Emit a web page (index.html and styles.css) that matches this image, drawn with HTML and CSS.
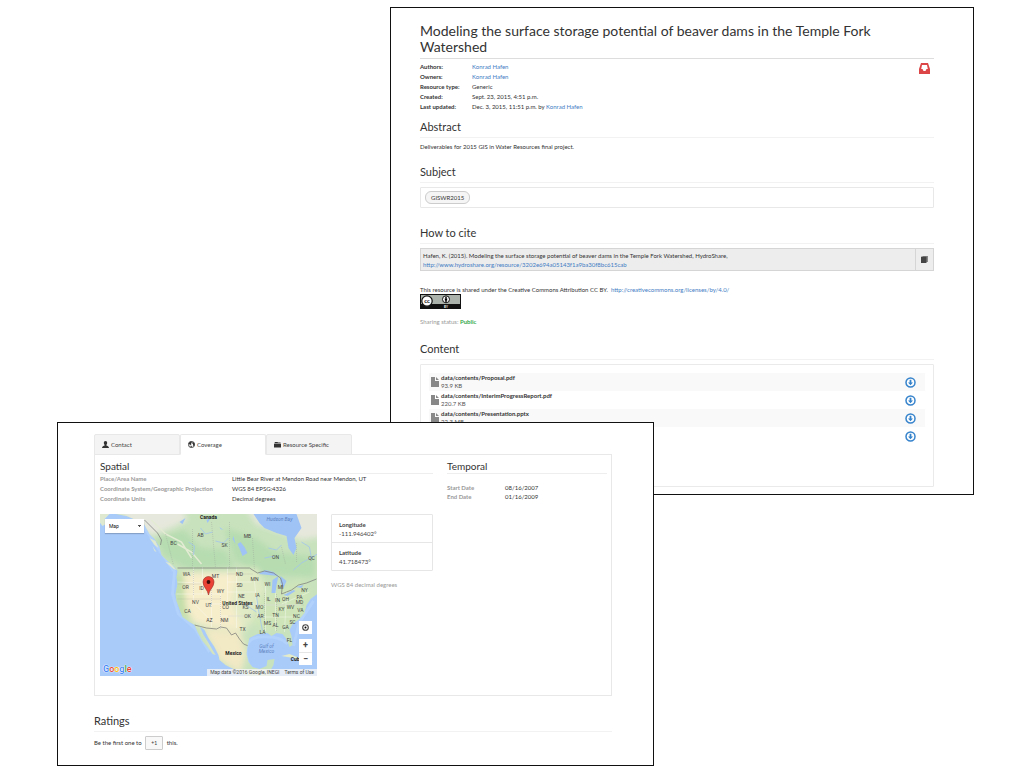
FILE: index.html
```html
<!DOCTYPE html>
<html lang="en">
<head>
<meta charset="utf-8">
<title>Modeling the surface storage potential of beaver dams</title>
<link rel="stylesheet" href="styles.css">
</head>
<body>
<svg class="sprite" aria-hidden="true">
  <symbol id="file" viewBox="0 0 8 10"><path fill="#888" d="M0 0h4v4h4v6H0zM5 0l3 3H5z"/></symbol>
  <symbol id="download" viewBox="0 0 11 11"><circle cx="5.5" cy="5.5" r="4.5" fill="#fff" stroke="#3683cc" stroke-width="1.5"/><path fill="#3683cc" d="M4.6 2.8h1.8v2.7H8L5.500 8.300 3 5.500h1.600z"/></symbol>
</svg>
<main class="desktop">
  <article class="window resource">
    <h1 class="title">Modeling the surface storage potential of beaver dams in the Temple Fork Watershed</h1>
    <div class="summary">
      <table class="meta">
        <tr><th scope="row">Authors:</th><td><a href="#">Konrad Hafen</a></td></tr>
        <tr><th scope="row">Owners:</th><td><a href="#">Konrad Hafen</a></td></tr>
        <tr><th scope="row">Resource type:</th><td>Generic</td></tr>
        <tr><th scope="row">Created:</th><td>Sept. 23, 2015, 4:51 p.m.</td></tr>
        <tr><th scope="row">Last updated:</th><td>Dec. 3, 2015, 11:51 p.m. by <a href="#">Konrad Hafen</a></td></tr>
      </table>
      <a class="inbox" href="#" aria-label="Open"><svg viewBox="0 0 11 11"><path fill="#dc4646" fill-rule="evenodd" d="M2 0h7l2 6v5H0V6zM3 2L2.200 6h1.300l1 2h2l1-2h1.300L8 2z"/></svg></a>
    </div>
    <section class="part">
      <h2>Abstract</h2>
      <p class="abstract">Deliverables for 2015 GIS in Water Resources final project.</p>
    </section>
    <section class="part">
      <h2>Subject</h2>
      <div class="subjects"><a class="tag" href="#">GISWR2015</a></div>
    </section>
    <section class="part">
      <h2>How to cite</h2>
      <div class="cite">
        <p>Hafen, K. (2015). Modeling the surface storage potential of beaver dams in the Temple Fork Watershed, HydroShare,<br><a href="#">http://www.hydroshare.org/resource/3202e694a05143f1a9ba30f8bc615cab</a></p>
        <button class="copy" aria-label="Copy"><svg viewBox="0 0 7 7"><path fill="#888" d="M1.500 0H7v6H1.500z"/><path fill="#444" d="M0 .7h5.500V7H0z"/></svg></button>
      </div>
      <div class="license">
        <p>This resource is shared under the Creative Commons Attribution CC BY. &nbsp;<a href="#">http://creativecommons.org/licenses/by/4.0/</a></p>
        <svg class="cc" viewBox="0 0 41 15" role="img" aria-label="CC BY"><path fill="#111" d="M0 0h41v15H0z"/><path fill="#aab2ab" d="M1 1h39v9H1z"/><circle cx="7" cy="7" r="5.200" fill="#fff" stroke="#111" stroke-width="1.200"/><text x="7" y="9" font-size="6" font-weight="bold" text-anchor="middle">cc</text><circle cx="26" cy="5.300" r="3.500" fill="#fff" stroke="#111"/><circle cx="26" cy="3.400" r=".8"/><path d="M24.800 4.300h2.400v2.200h-.5v1.700h-1.400V6.500h-.5z"/><text x="26" y="14" font-size="3" fill="#fff" font-weight="bold" text-anchor="middle">BY</text></svg>
      </div>
      <p class="status">Sharing status: <strong>Public</strong></p>
    </section>
    <section class="part">
      <h2>Content</h2>
      <div class="content">
        <ul class="files">
          <li><svg class="doc"><use href="#file"/></svg><div class="name"><b>data/contents/Proposal.pdf</b><small>93.9 KB</small></div><a class="get" href="#" aria-label="Download"><svg><use href="#download"/></svg></a></li>
          <li><svg class="doc"><use href="#file"/></svg><div class="name"><b>data/contents/InterimProgressReport.pdf</b><small>220.7 KB</small></div><a class="get" href="#" aria-label="Download"><svg><use href="#download"/></svg></a></li>
          <li><svg class="doc"><use href="#file"/></svg><div class="name"><b>data/contents/Presentation.pptx</b><small>22.3 MB</small></div><a class="get" href="#" aria-label="Download"><svg><use href="#download"/></svg></a></li>
          <li><svg class="doc"><use href="#file"/></svg><div class="name"></div><a class="get" href="#" aria-label="Download"><svg><use href="#download"/></svg></a></li>
        </ul>
      </div>
    </section>
  </article>

  <article class="window details">
    <div class="tabs" role="tablist">
      <button class="tab" role="tab"><svg viewBox="0 0 8 8"><path fill="#333" d="M4 0c1.300 0 2 1 1.900 2.300C5.800 3.500 5.300 4 5 4.500v.6c1 .4 3 .8 3 2.900H0c0-2.100 2-2.500 3-2.900v-.6c-.3-.5-.8-1-.9-2.200C2 1 2.700 0 4 0z"/></svg>Contact</button>
      <button class="tab active" role="tab" aria-selected="true"><svg viewBox="0 0 8 8"><circle cx="4" cy="4" r="3.500" fill="#fff" stroke="#333"/><path fill="#333" d="M.5 3L2 1l2-.6.500 1.200-1 .9.600 1L3 4.600 1.700 4zM5 1l2 1 .7 2L7 5.800 5.600 5l.2-1.500L4.900 3zM3 5l1.500.6L4 7.500 3 7z"/></svg>Coverage</button>
      <button class="tab" role="tab"><svg viewBox="0 0 8 8"><path fill="#333" d="M1 1h3l.5.6H7.500V2.500h-7zM0 3h8v4.500H0z"/></svg>Resource Specific</button>
    </div>
    <div class="panel">
      <section class="spatial">
        <h3>Spatial</h3>
        <table class="facts">
          <tr><th scope="row">Place/Area Name</th><td>Little Bear River at Mendon Road near Mendon, UT</td></tr>
          <tr><th scope="row">Coordinate System/Geographic Projection</th><td>WGS 84 EPSG:4326</td></tr>
          <tr><th scope="row">Coordinate Units</th><td>Decimal degrees</td></tr>
        </table>
        <div class="place">
          <div class="map">
            <svg class="land" viewBox="0 0 218 162" preserveAspectRatio="xMidYMid slice" role="img" aria-label="Map of North America">
              <defs>
                <clipPath id="coast"><path d="M16 0L27 2 44 9 50 20 55 25 60 33 62 41 68 47 75 53 78 57 77 63 78 70 76 80 77 87 80 95 83 103 90 108 95 111 98 118 103 127 108 133 113 140 116 141 113 136 109 129 104 121 100 112 105 116 109 124 115 133 119 141 120 146 126 151 132 154 141 158 148 162H171L170 158 174 151 175 145 168 146 167 152 160 155 153 153 149 148 147 140 148 132 150 124 158 120 168 119 172 122 177 119 183 120 187 125 190 133 193 131 192 122 190 116 193 110 200 105 205 99 207 91 211 85 218 80V0z"/></clipPath>
                <filter id="soft"><feGaussianBlur stdDeviation="3"/></filter>
              </defs>
              <path fill="#a9cbfa" d="M0 0h218v162H0z"/>
              <path fill="none" stroke="#b2d1fb" stroke-width="3" d="M44 12L60 36 75 58 73 80 79 100 96 115 110 138M150 153Q140 125 160 123T188 130M194 132L200 108 214 87"/>
              <path fill="#dfe9cf" d="M0 0h10L5 5l3 4-5 3-3-4zM50 24l5 7 4 3-3-7zM53 32l4 6-2-1zM66 48l8 7 3 1-6-7z"/>
              <g clip-path="url(#coast)">
                <path fill="#c8e2bd" d="M0 0h218v162H0z"/>
                <g filter="url(#soft)">
                  <path fill="#e7e8dd" d="M15 -6h68l5 12-12 6-24 10-17-10zM146 -6h80v28l-25 4-20-8-24-8z"/>
                  <path fill="#b6dcb0" d="M56 24l29-8 15 18 25 2 10 16-45 4-25-14zM125 14l30 10 20 14 40 5v20l-60-3-20-15z"/>
                  <path fill="#f6edcb" d="M81 58h62l5 37-3 22-20-2-30-5-10-14-3-15z"/>
                  <path fill="#e0eac5" d="M140 54h18l12 30-26 34-12-30z"/>
                  <path fill="#cfe5b9" d="M162 80l40-15 10 15-15 30-30 8-15-10z"/>
                  <path fill="#f2e9c5" d="M103 114l38 4 6 22-6 20-22-14z"/>
                  <path fill="#c0dda4" d="M76 60h8l1 20 2 16 6 12-14-10z"/>
                </g>
                <g fill="none" stroke="#e3ebd3"><path stroke-width="1.500" d="M52 6l14 14 16 8 10 16M78 30l14 8 10 12"/></g>
                <path fill="none" stroke="#fff" stroke-opacity=".6" stroke-width=".6" d="M78 68l23 1M77 80h44M94 53v36l18 18M103 53v27M112 69v44M121 80v35M109 90h46M128 53v37M137 53v61M128 68h24M128 78h28M155 67l3 35M166 71v46M154 91h48M156 103h41M176 72v45M187 78l-2 40M182 90l28-12M121 102h35"/>
                <g fill="none" stroke="#999" stroke-opacity=".7" stroke-dasharray="1 1" stroke-width=".5"><path d="M66 20l8 31M93 15v38M112 8l4 45M130 8v45M153 24l2 32M182 33l4 17M197 29v20M94 56v25M112 68v25M128 60h26M78 70h24M78 85h44M121 82v34M129 102h27M165 79v38M177 80v37M155 91h49"/></g>
                <path fill="#9fc3f5" d="M154 0l6 9 5 5 12 5 10 3 2 12 5 7 3-7-2-10 7-10-5-14zM138 30l3 7 2 5 5-3-3-6-4-5zM159 60l7-4 8 2 5 4-10-1zM172 79l1-13 6-4-2 9-1 8zM181 62l6 5-3 7-3-5zM184 81l10-5 2 1-8 5zM196 73l8-2-2 3zM80 8l6-4-3 6zM107 6l5-3-4 6zM120 13l4 3-3-1zM134 22l2 8-3-5z"/>
                <path fill="none" stroke="#a2c4ed" stroke-width=".8" d="M101 14l5 6 7-2M89 28l6 4-1 9M116 27l8 2 5-5M169 34l8 2 5-5M202 28l8 5 2 12M165 44l10-2M194 56l8-7 16-9M157 82l2 14 4 21M145 90l12 8"/>
                <path fill="none" stroke="#777" stroke-width=".7" d="M45 6l8 8 5 5 4 7-1 5M78 54H150l3 2 5 3 7-2 9 2 7 5 2 6-1 10 10-4 7-5 8-2 10-4M95 111l12 3 10 1 4-2 6 1 5 7 4-2 4 6 4 5 5 2"/>
              </g>
              <path fill="#e3ebc9" d="M182 142l8-2 10 4 11 2 2 2-10 1-9-5z"/>
              <g class="labels">
                <text x="109" y="5" class="country">Canada</text><text x="138" y="91" class="country">United States</text><text x="134" y="141" class="country">Mexico</text><text x="197" y="147" class="country">Cuba</text>
                <text x="180" y="7" class="sea">Hudson Bay</text><text x="167" y="134" class="sea">Gulf of</text><text x="167" y="139" class="sea">Mexico</text>
                <text x="101" y="23">AB</text><text x="74" y="31">BC</text><text x="125" y="33">SK</text><text x="148" y="24">MB</text><text x="176" y="45">ON</text><text x="212" y="46">QC</text><text x="87" y="62">WA</text><text x="116" y="64">MT</text><text x="140" y="62">ND</text><text x="155" y="67">MN</text><text x="86" y="75">OR</text><text x="102" y="76">ID</text><text x="121" y="79">WY</text><text x="140" y="73">SD</text><text x="168" y="72">WI</text><text x="181" y="75">MI</text><text x="205" y="78">NY</text><text x="142" y="84">NE</text><text x="158" y="83">IA</text><text x="169" y="87">IL</text><text x="178" y="88">IN</text><text x="186" y="87">OH</text><text x="200" y="85">PA</text><text x="96" y="90">NV</text><text x="109" y="93">UT</text><text x="126" y="95">CO</text><text x="146" y="95">KS</text><text x="160" y="95">MO</text><text x="182" y="97">KY</text><text x="191" y="95">WV</text><text x="201" y="98">VA</text><text x="200" y="90">MD</text><text x="88" y="99">CA</text><text x="110" y="108">AZ</text><text x="125" y="108">NM</text><text x="148" y="104">OK</text><text x="161" y="104">AR</text><text x="176" y="103">TN</text><text x="197" y="104">NC</text><text x="168" y="111">MS</text><text x="176" y="113">AL</text><text x="186" y="115">GA</text><text x="193" y="110">SC</text><text x="143" y="117">TX</text><text x="163" y="120">LA</text><text x="190" y="128">FL</text>
              </g>
              <path fill="#ea4335" stroke="#962b22" stroke-width=".6" d="M109 81c-.5-5-5.500-8-5.500-13a5.500 5.500 0 0 1 11 0c0 5-5 8-5.500 13z"/><circle cx="109" cy="68" r="1.900" fill="#400c08"/>
            </svg>
            <select class="maptype" aria-label="Map type"><option>Map</option></select>
            <span class="google"><i>G</i><i>o</i><i>o</i><i>g</i><i>l</i><i>e</i></span>
            <div class="controls">
              <button aria-label="Recenter"><svg viewBox="0 0 7 7"><circle cx="3.500" cy="3.500" r="2.800" fill="none" stroke="#444" stroke-width="1.100"/><circle cx="3.500" cy="3.500" r="1"/></svg></button>
              <div class="zoom"><button aria-label="Zoom in">+</button><button aria-label="Zoom out">−</button></div>
            </div>
            <p class="credit"><span>Map data ©2016 Google, INEGI</span><a href="#">Terms of Use</a></p>
          </div>
          <div class="coords">
            <dl><div><dt>Longitude</dt><dd>-111.946402°</dd></div><div><dt>Latitude</dt><dd>41.718473°</dd></div></dl>
            <p>WGS 84 decimal degrees</p>
          </div>
        </div>
      </section>
      <section class="temporal">
        <h3>Temporal</h3>
        <table class="dates">
          <tr><th scope="row">Start Date</th><td>08/16/2007</td></tr>
          <tr><th scope="row">End Date</th><td>01/16/2009</td></tr>
        </table>
      </section>
    </div>
    <section class="ratings">
      <h2>Ratings</h2>
      <p>Be the first one to <button class="plus">+1</button> this.</p>
    </section>
  </article>
</main>
</body>
</html>
```
FILE: styles.css
```css
* { box-sizing: border-box; }
body { margin: 0; background: #fff; color: #333; font: 6px/8px Lato, sans-serif; }
h1, h2, h3, p, ul, dl, dd { margin: 0; padding: 0; font-weight: 400; }
a { color: #3f7cc4; text-decoration: none; }
button, select { font: inherit; color: inherit; border: 0; padding: 0; margin: 0; background: none; }
table { border-collapse: collapse; }
th, td { padding: 0; text-align: left; vertical-align: middle; }
svg { display: block; }
.sprite { position: absolute; width: 0; height: 0; }

.desktop { position: relative; min-height: 100vh; }
.window { position: absolute; background: #fff; border: 1px solid #111; }
.resource { top: 7px; left: 390px; right: 50px; padding: 15px 39px 7px 29px; }
.details { top: 422px; left: 57px; right: 370px; padding: 11px 41px 15px 36px; }

.title { font-size: 14px; line-height: 16px; padding-bottom: 3px; border-bottom: 1px solid #ddd; }
.summary { display: flex; justify-content: space-between; padding-top: 3px; }
.meta th, .meta td { height: 10px; }
.meta th { width: 52px; font-weight: 700; }
.inbox, .inbox svg { width: 11px; height: 11px; }
.inbox { margin: 1px 4px 0 0; }

h2 { font-size: 11px; line-height: 14px; padding-bottom: 3px; border-bottom: 1px solid #f2f2f2; }
.resource h2 { margin-bottom: 4px; }
.part { margin-top: 8px; }
.part + .part { margin-top: 13px; }
.abstract { padding: 1px 0; }
.subjects { display: flex; padding: 3px 4px; border: 1px solid #e8e8e8; border-radius: 1px; margin-bottom: 18px; }
.tag { padding: 1px 5px; border: 1px solid #ccc; border-radius: 6px; background: #f5f5f5; color: #333; line-height: 9px; }
.cite { display: flex; border: 1px solid #d5d5d5; background: #ededed; line-height: 9px; }
.cite p { flex: 1; padding: 2px 2px 1px; }
.copy { display: grid; place-items: center; width: 18px; border-left: 1px solid #d5d5d5; }
.copy svg { width: 7px; height: 7px; }
.license { margin-top: 15px; }
.cc { width: 41px; height: 15px; }
.status { margin: 9px 0 16px; color: #999; }
.status strong { color: #35ab4b; }
.content { border: 1px solid #eaeaea; border-radius: 1px; padding: 8px 8px 41px; }
.files { list-style: none; }
.files li { display: flex; align-items: center; height: 18px; padding: 0 9px 0 2px; }
.files li:nth-child(odd) { background: #f9f9f9; }
.doc { width: 8px; height: 10px; }
.name { flex: 1; margin-left: 2px; }
.name b, .name small { display: block; }
.name small { font-size: 6px; color: #555; }
.get, .get svg { display: block; width: 11px; height: 11px; }

.tabs { display: grid; grid-template-columns: repeat(3, 86px); margin-bottom: -1px; position: relative; }
.tab { display: flex; align-items: center; height: 21px; gap: 2px; padding: 0 7px; border: 1px solid #e8e8e8; background: #f4f4f4; color: #444; border-radius: 2px 2px 0 0; }
.tab.active { background: #fff; border-bottom-color: #fff; }
.tab svg { width: 7px; height: 7px; }
.panel { display: grid; grid-template-columns: 333fr 160fr; gap: 14px; padding: 5px 4px 19px 5px; border: 1px solid #e8e8e8; }
h3 { font-size: 10px; line-height: 13px; border-bottom: 1px solid #eee; }
.facts th, .facts td { height: 10px; }
.facts th { width: 132px; white-space: nowrap; }
th { font-weight: 700; }
.facts th, .dates th { color: #999; }
.place { display: flex; gap: 14px; margin-top: 10px; }
.map { position: relative; flex: 1; height: 162px; overflow: hidden; font-family: Roboto, sans-serif; }
.land { width: 100%; height: 100%; }
.labels { font-size: 5px; fill: #444; text-anchor: middle; }
.labels .country { font-weight: 700; fill: #222; }
.labels .sea { font-style: italic; fill: #5d82bd; }
.maptype { position: absolute; left: 5px; top: 5px; width: 39px; height: 14px; padding: 0 4px; font-size: 5px; color: #111; background: #fff; appearance: none; background-image: linear-gradient(45deg, transparent 50%, #555 50%), linear-gradient(315deg, transparent 50%, #555 50%); background-size: 2px 2px; background-position: 33px 6px, 35px 6px; background-repeat: no-repeat; box-shadow: 0 1px 1px #0003; }
.google { position: absolute; left: 3px; bottom: 1px; font: 500 9px/11px Roboto, sans-serif; color: #4285f4; text-shadow: 0 0 1px #fff, 0 0 1px #fff, 0 0 1px #fff; }
.google i { font-style: normal; }
.google i:nth-child(2), .google i:nth-child(6) { color: #ea4335; }
.google i:nth-child(3) { color: #fbbc05; }
.google i:nth-child(5) { color: #34a853; }
.controls { position: absolute; right: 5px; bottom: 11px; display: grid; gap: 5px; }
.controls button { display: grid; place-items: center; width: 13px; height: 13px; background: #fff; font: 700 9px/13px Roboto, sans-serif; color: #444; }
.controls svg { width: 7px; height: 7px; }
.zoom button + button { border-top: 1px solid #e6e6e6; }
.credit { position: absolute; right: 0; bottom: 0; display: flex; gap: 5px; padding: 0 3px; font-size: 5px; line-height: 7px; background: #f5f5f5cc; color: #444; }
.credit a { color: #444; }
.coords { width: 102px; color: #999; }
.coords dl { border: 1px solid #e6e6e6; border-radius: 1px; color: #444; line-height: 9px; margin-bottom: 10px; }
.coords dl div { padding: 5px 7px 4px; }
.coords dl div + div { border-top: 1px solid #e6e6e6; }
.coords dt { font-weight: 700; }
.dates { margin-top: 9px; }
.dates th, .dates td { height: 9px; }
.dates th { width: 58px; }
.ratings { margin-top: 18px; }
.ratings p { margin-top: 4px; line-height: 14px; }
.plus { width: 18px; height: 14px; margin: 0 2px; border: 1px solid #ccc; border-radius: 1px; background: #f8f8f8; font-size: 5px; line-height: 12px; }
```
